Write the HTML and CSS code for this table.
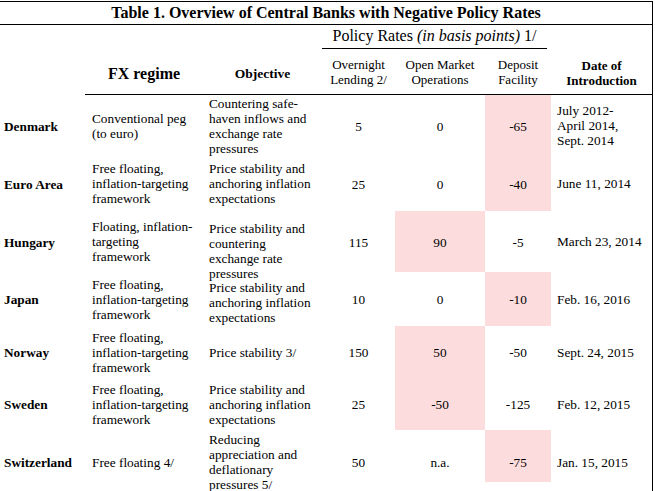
FILE: index.html
```html
<!DOCTYPE html>
<html lang="en">
<head>
<meta charset="utf-8">
<title>Table 1. Overview of Central Banks with Negative Policy Rates</title>
<link rel="stylesheet" href="styles.css">
</head>
<body>
<table class="rates">
  <colgroup>
    <col class="c-country">
    <col class="c-fx">
    <col class="c-obj">
    <col class="c-on">
    <col class="c-omo">
    <col class="c-dep">
    <col class="c-date">
  </colgroup>
  <thead>
    <tr class="row-title">
      <th colspan="7" class="title">Table 1. Overview of Central Banks with Negative Policy Rates</th>
    </tr>
    <tr class="row-group">
      <th colspan="3"></th>
      <th colspan="3" class="group"><div class="group-label">Policy Rates <i>(in basis points)</i> 1/</div></th>
      <th></th>
    </tr>
    <tr class="row-head">
      <th class="blank"></th>
      <th class="h-fx ruled">FX regime</th>
      <th class="h-obj ruled">Objective</th>
      <th class="h-rate ruled">Overnight<br>Lending 2/</th>
      <th class="h-rate ruled">Open Market<br>Operations</th>
      <th class="h-rate ruled">Deposit<br>Facility</th>
      <th class="h-date ruled">Date of<br>Introduction</th>
    </tr>
  </thead>
  <tbody>
    <tr class="h61">
      <th class="country">Denmark</th>
      <td class="text">Conventional peg<br>(to euro)</td>
      <td class="text">Countering safe-<br>haven inflows and<br>exchange rate<br>pressures</td>
      <td class="num">5</td>
      <td class="num">0</td>
      <td class="num shade">-65</td>
      <td class="date">July 2012-<br>April 2014,<br>Sept. 2014</td>
    </tr>
    <tr class="h55">
      <th class="country">Euro Area</th>
      <td class="text">Free floating,<br>inflation-targeting<br>framework</td>
      <td class="text">Price stability and<br>anchoring inflation<br>expectations</td>
      <td class="num">25</td>
      <td class="num">0</td>
      <td class="num shade">-40</td>
      <td class="date">June 11, 2014</td>
    </tr>
    <tr class="h61">
      <th class="country">Hungary</th>
      <td class="text">Floating, inflation-<br>targeting<br>framework</td>
      <td class="text"><div class="drop">Price stability and<br>countering<br>exchange rate<br>pressures</div></td>
      <td class="num">115</td>
      <td class="num shade">90</td>
      <td class="num">-5</td>
      <td class="date">March 23, 2014</td>
    </tr>
    <tr class="h54">
      <th class="country">Japan</th>
      <td class="text">Free floating,<br>inflation-targeting<br>framework</td>
      <td class="text low">Price stability and<br>anchoring inflation<br>expectations</td>
      <td class="num">10</td>
      <td class="num">0</td>
      <td class="num shade">-10</td>
      <td class="date">Feb. 16, 2016</td>
    </tr>
    <tr class="h52">
      <th class="country">Norway</th>
      <td class="text">Free floating,<br>inflation-targeting<br>framework</td>
      <td class="text">Price stability 3/</td>
      <td class="num">150</td>
      <td class="num shade">50</td>
      <td class="num">-50</td>
      <td class="date">Sept. 24, 2015</td>
    </tr>
    <tr class="h52">
      <th class="country">Sweden</th>
      <td class="text">Free floating,<br>inflation-targeting<br>framework</td>
      <td class="text">Price stability and<br>anchoring inflation<br>expectations</td>
      <td class="num">25</td>
      <td class="num shade">-50</td>
      <td class="num">-125</td>
      <td class="date">Feb. 12, 2015</td>
    </tr>
    <tr class="h64">
      <th class="country">Switzerland</th>
      <td class="text">Free floating 4/</td>
      <td class="text">Reducing<br>appreciation and<br>deflationary<br>pressures 5/</td>
      <td class="num">50</td>
      <td class="num">n.a.</td>
      <td class="num shade-top">-75</td>
      <td class="date">Jan. 15, 2015</td>
    </tr>
  </tbody>
</table>
</body>
</html>
```

FILE: styles.css
```css
html, body {
  margin: 0;
  padding: 0;
  background: #fff;
}

body {
  font-family: "Liberation Serif", "Times New Roman", serif;
  color: #000;
}

.rates {
  margin-top: 1px;
  width: 653px;
  table-layout: fixed;
  border-collapse: separate;
  border-spacing: 0;
  border-top: 1px solid #000;
  border-right: 1px solid #000;
}

.c-country { width: 85px; }
.c-fx { width: 118px; }
.c-obj { width: 119px; }
.c-on { width: 73px; }
.c-omo { width: 90px; }
.c-dep { width: 66px; }
.c-date { width: 101px; }

th, td {
  padding: 0;
  font-weight: normal;
}

.row-title { height: 23px; }
.row-group { height: 24px; }
.row-head { height: 46px; }

.row-title th {
  border-bottom: 1px solid #000;
  font-size: 16px;
  font-weight: bold;
  text-align: center;
  line-height: 20px;
}

.row-group th {
  vertical-align: bottom;
}

.group-label {
  margin-right: 4px;
  border-bottom: 1px solid #000;
  font-size: 16px;
  line-height: 22px;
  padding-bottom: 1px;
  text-align: center;
}

.row-head th {
  vertical-align: middle;
  text-align: center;
  font-size: 13px;
  line-height: 15px;
}

.row-head th.ruled {
  border-bottom: 1px solid #000;
}

.row-head .h-fx {
  font-size: 16px;
  font-weight: bold;
  padding-top: 3px;
}

.row-head .h-obj {
  font-size: 13.5px;
  font-weight: bold;
  padding-top: 3px;
}

.row-head .h-date {
  font-weight: bold;
  padding-top: 2px;
}

tbody td, tbody th {
  font-size: 13.3px;
  line-height: 15px;
  vertical-align: middle;
}

.h61 { height: 61px; }
.h55 { height: 55px; }
.h54 { height: 54px; }
.h52 { height: 52px; }
.h64 { height: 64px; }

.country {
  text-align: left;
  font-weight: bold;
  padding-left: 4px;
  padding-top: 1px;
}

.text {
  text-align: left;
  padding-left: 7px;
}

td.text + td.text {
  padding-left: 6px;
}

td.text.low {
  padding-top: 6px;
}

.num {
  text-align: center;
  padding-top: 1px;
}

.date {
  text-align: left;
  padding-left: 6px;
}

.shade {
  background: #fcdcdc;
}

.shade-top {
  background: linear-gradient(#fcdcdc 0, #fcdcdc 52px, #fff 52px);
}

.drop {
  margin-bottom: -18px;
}
```
